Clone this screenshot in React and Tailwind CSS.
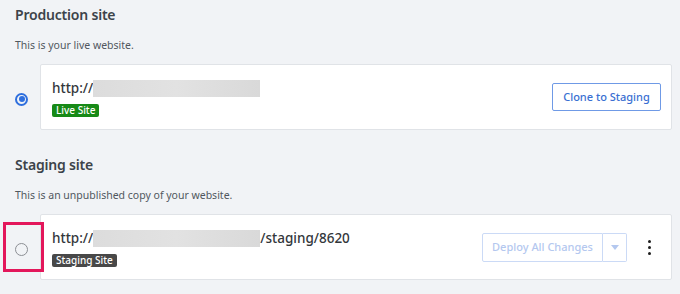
import React from 'react';

const Radio = ({ checked }) => (
  <div className="w-[25px] shrink-0 flex items-center">
    {checked ? (
      <div className="w-[13px] h-[13px] rounded-full border-[2px] border-[#2f6fde] flex items-center justify-center">
        <div className="w-[6px] h-[6px] rounded-full bg-[#2f6fde]"></div>
      </div>
    ) : (
      <div className="w-[13px] h-[13px] rounded-full border-[1.5px] border-[#8c8f94]"></div>
    )}
  </div>
);

const Blur = () => (
  <span className="inline-block w-[167px] h-[17px] bg-gradient-to-r from-[#dcdcdc] via-[#e2e2e2] to-[#d9d9d9]"></span>
);

const App = () => {
  return (
    <div className="w-[680px] h-[294px] bg-[#f1f3f6] pt-[5px] pl-[15px] pr-[8px] overflow-hidden relative" style={{ fontFamily: '"Noto Sans", "Open Sans", sans-serif' }}>
      {/* PRODUCTION */}
      <h2 className="text-[14px] tracking-[-0.2px] leading-[20px] font-semibold text-[#3c434a]">Production site</h2>
      <p className="mt-[12px] text-[10.5px] leading-[16px] text-[#50575e]">This is your live website.</p>
      <div className="flex mt-[11px]">
        <div className="flex items-center pt-[4px]"><Radio checked /></div>
        <div className="flex-1 h-[66px] bg-white border border-[#e0e3e7] rounded-[2px] pl-[11px] pr-[10px] flex items-center">
          <div className="flex flex-col pt-[1px]">
            <div className="flex items-center h-[20px] text-[13.5px] font-medium text-[#33373b]">
              http://<Blur />
            </div>
            <span className="mt-[6px] self-start h-[13px] px-[4px] rounded-[2px] bg-[#178a17] text-white text-[10px] leading-[13px] font-medium">Live Site</span>
          </div>
          <button className="ml-auto w-[109px] h-[28px] border border-[#6f9ae6] rounded-[2px] text-[11px] font-medium text-[#3a6fd2] bg-white">Clone to Staging</button>
        </div>
      </div>

      {/* STAGING */}
      <h2 className="mt-[25px] text-[14px] tracking-[-0.2px] leading-[20px] font-semibold text-[#3c434a]">Staging site</h2>
      <p className="mt-[12px] text-[10.5px] leading-[16px] text-[#50575e]">This is an unpublished copy of your website.</p>
      <div className="flex mt-[11px]">
        <div className="flex items-center pt-[4px]"><Radio /></div>
        <div className="flex-1 h-[66px] bg-white border border-[#e0e3e7] rounded-[2px] pl-[11px] pr-[20px] flex items-center">
          <div className="flex flex-col pt-[1px]">
            <div className="flex items-center h-[20px] text-[13.5px] font-medium text-[#33373b]">
              http://<Blur />/staging/8620
            </div>
            <span className="mt-[6px] self-start h-[13px] px-[4px] rounded-[2px] bg-[#484848] text-white text-[10px] leading-[13px] font-medium">Staging Site</span>
          </div>
          <div className="ml-auto flex h-[29px]">
            <button className="w-[121px] h-full border border-[#cbdaf6] rounded-l-[2px] text-[11px] font-medium text-[#b4c8ef] bg-white">Deploy All Changes</button>
            <button className="w-[24px] h-full border border-l-0 border-[#cbdaf6] rounded-r-[2px] flex items-center justify-center bg-white">
              <svg width="8" height="5" viewBox="0 0 8 5"><path d="M0 0h8L4 5z" fill="#b4c8ef" /></svg>
            </button>
          </div>
          <div className="ml-[21px] flex flex-col gap-[3px] items-center">
            <span className="w-[3px] h-[3px] rounded-full bg-[#1d1d1d]"></span>
            <span className="w-[3px] h-[3px] rounded-full bg-[#1d1d1d]"></span>
            <span className="w-[3px] h-[3px] rounded-full bg-[#1d1d1d]"></span>
          </div>
        </div>
      </div>

      {/* highlight */}
      <div className="absolute left-[3px] top-[222px] w-[41px] h-[50px] border-[3px] border-[#e3175b]"></div>
    </div>
  );
};

export default App;
